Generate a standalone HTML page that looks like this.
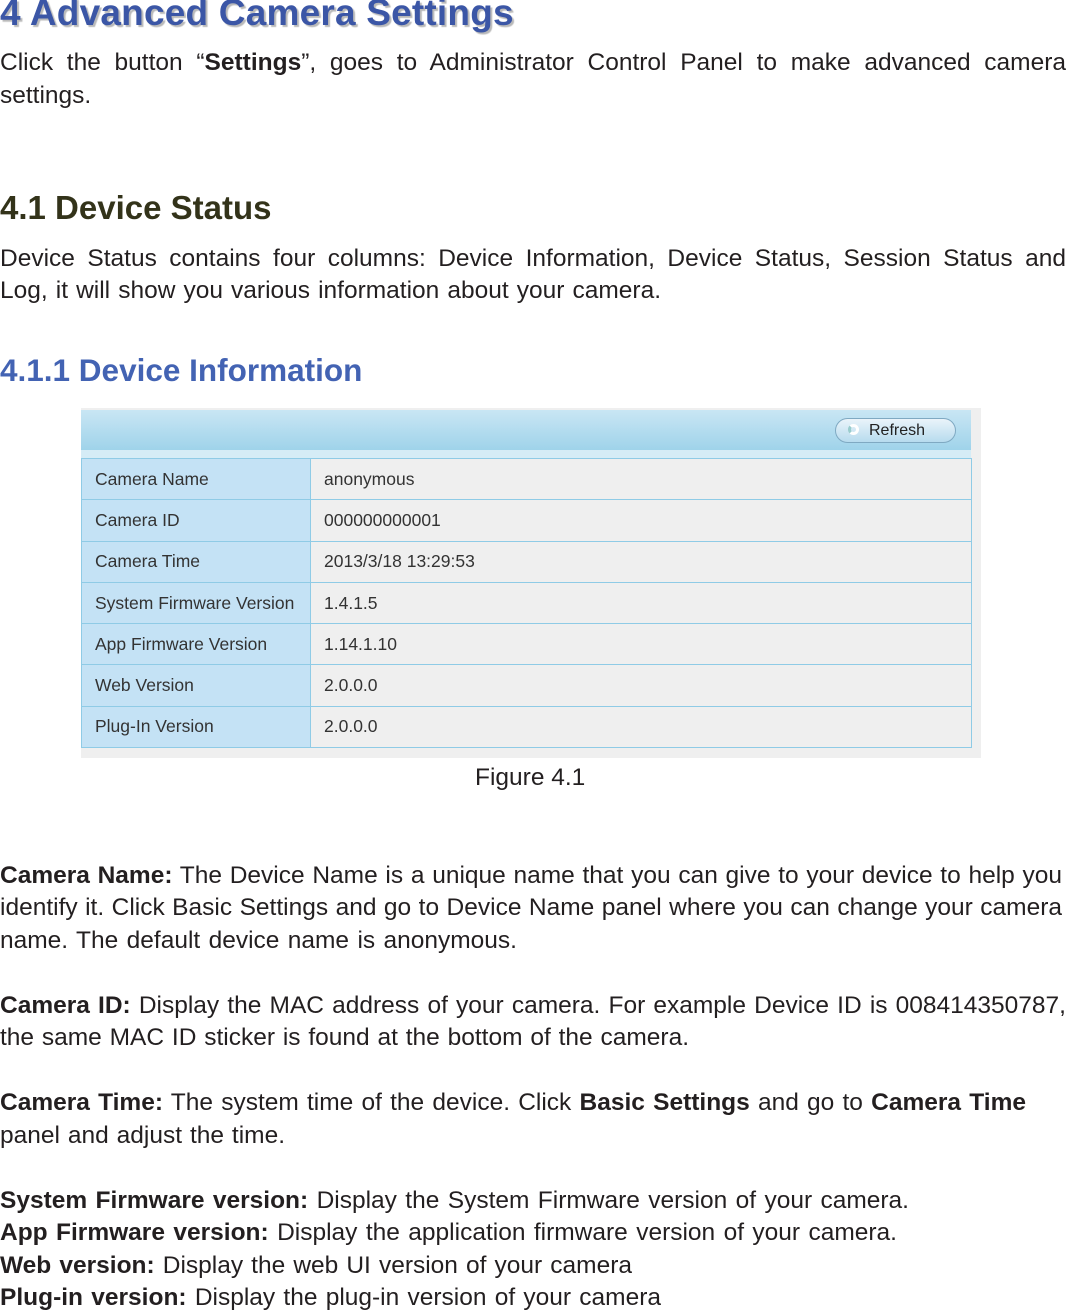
<!DOCTYPE html>
<html><head><meta charset="utf-8"><style>
body{margin:0;width:1066px;height:1311px;background:#fff;position:relative;overflow:hidden;font-family:"Liberation Sans",Arial,sans-serif;color:#231f20}
.l{position:absolute;left:0;font-size:24.5px;line-height:28px;text-align:justify;text-align-last:justify;white-space:nowrap;height:28px;overflow:visible}
.n{text-align-last:left}
b{font-weight:bold}
.t{position:absolute;left:0;top:-8px;font-size:37px;font-weight:bold;color:#3b56a6;text-shadow:2px 2px 1px #b9b9b9;letter-spacing:0.2px}
.h2{position:absolute;left:0;top:189px;font-size:33px;font-weight:bold;color:#33331a}
.h3{position:absolute;left:0;top:352px;font-size:31.5px;font-weight:bold;color:#4363b3}
.fig{position:absolute;left:81px;top:408px;width:900px;height:350px;background:#efefef}
.hdr{position:absolute;left:0;top:2px;width:890px;height:40px;background:linear-gradient(#c9e6f4,#9fd3ea)}
.btn{position:absolute;left:754px;top:8px;width:121px;height:25px;border:1px solid #7fa9c2;border-radius:14px;background:linear-gradient(#eaf4fa,#b7dbee);font-size:16px;color:#222;box-sizing:border-box}
.btn span{position:absolute;left:33px;top:3px}
.btn i{position:absolute;left:12px;top:5px;width:11px;height:11px;border-radius:50%;border:3px solid #fff;border-left-color:#9cc;box-sizing:border-box}
.strip{position:absolute;left:0;top:42px;width:890px;height:9px;background:#d5ecf6}
table{position:absolute;left:0;top:50px;border-collapse:collapse;width:891px;font-size:17.5px;color:#333}
td{height:41.3px;border:1px solid #8fcbe6;padding:0 0 0 13px;box-sizing:border-box}
td.a{background:#c4e2f5;width:229px}
td.b{background:#efefef}
</style></head><body>
<div class="t">4 Advanced Camera Settings</div>
<div class="l" style="top:49px;width:1066px">Click the button “<b>Settings</b>”, goes to Administrator Control Panel to make advanced camera</div>
<div class="l n" style="top:82px">settings.</div>
<div class="h2">4.1 Device Status</div>
<div class="l" style="top:245px;width:1066px">Device Status contains four columns: Device Information, Device Status, Session Status and</div>
<div class="l" style="top:277px;width:661px">Log, it will show you various information about your camera.</div>
<div class="h3">4.1.1 Device Information</div>
<div class="fig">
<div class="hdr"><div class="btn"><i></i><span>Refresh</span></div></div>
<div class="strip"></div>
<table>
<tr><td class="a">Camera Name</td><td class="b">anonymous</td></tr>
<tr><td class="a">Camera ID</td><td class="b">000000000001</td></tr>
<tr><td class="a">Camera Time</td><td class="b">2013/3/18 13:29:53</td></tr>
<tr><td class="a">System Firmware Version</td><td class="b">1.4.1.5</td></tr>
<tr><td class="a">App Firmware Version</td><td class="b">1.14.1.10</td></tr>
<tr><td class="a">Web Version</td><td class="b">2.0.0.0</td></tr>
<tr><td class="a">Plug-In Version</td><td class="b">2.0.0.0</td></tr>
</table>
</div>
<div class="l n" style="top:764px;left:475px">Figure 4.1</div>
<div class="l" style="top:862px;width:1062px"><b>Camera Name:</b> The Device Name is a unique name that you can give to your device to help you</div>
<div class="l" style="top:894px;width:1062px">identify it. Click Basic Settings and go to Device Name panel where you can change your camera</div>
<div class="l" style="top:927px;width:517px">name. The default device name is anonymous.</div>
<div class="l" style="top:992px;width:1066px"><b>Camera ID:</b> Display the MAC address of your camera. For example Device ID is 008414350787,</div>
<div class="l" style="top:1024px;width:689px">the same MAC ID sticker is found at the bottom of the camera.</div>
<div class="l" style="top:1089px;width:1026px"><b>Camera Time:</b> The system time of the device. Click <b>Basic Settings</b> and go to <b>Camera Time</b></div>
<div class="l" style="top:1122px;width:285px">panel and adjust the time.</div>
<div class="l" style="top:1187px;width:909px"><b>System Firmware version:</b> Display the System Firmware version of your camera.</div>
<div class="l" style="top:1219px;width:897px"><b>App Firmware version:</b> Display the application firmware version of your camera.</div>
<div class="l" style="top:1252px;width:632px"><b>Web version:</b> Display the web UI version of your camera</div>
<div class="l" style="top:1284px;width:661px"><b>Plug-in version:</b> Display the plug-in version of your camera</div>
</body></html>
